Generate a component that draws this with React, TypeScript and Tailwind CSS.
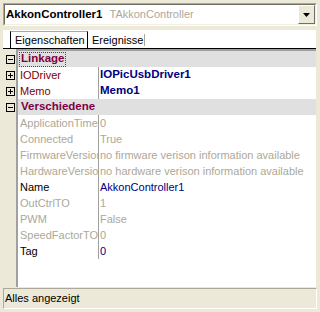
type Row =
  | { kind: 'cat'; label: string; focus?: boolean }
  | { kind: 'prop'; name: string; value: string; nameCls: string; valueCls: string; expand?: boolean };

const RO = 'text-[#ACA899]';

const rows: Row[] = [
  { kind: 'cat', label: 'Linkage', focus: true },
  { kind: 'prop', name: 'IODriver', value: 'IOPicUsbDriver1', nameCls: 'text-[#800000]', valueCls: 'text-[#000080] font-bold text-[11.5px]', expand: true },
  { kind: 'prop', name: 'Memo', value: 'Memo1', nameCls: 'text-[#800000]', valueCls: 'text-[#000080] font-bold text-[11.5px]', expand: true },
  { kind: 'cat', label: 'Verschiedene' },
  { kind: 'prop', name: 'ApplicationTimeout', value: '0', nameCls: RO, valueCls: RO },
  { kind: 'prop', name: 'Connected', value: 'True', nameCls: RO, valueCls: RO },
  { kind: 'prop', name: 'FirmwareVersion', value: 'no firmware verison information available', nameCls: RO, valueCls: RO },
  { kind: 'prop', name: 'HardwareVersion', value: 'no hardware verison information available', nameCls: RO, valueCls: RO },
  { kind: 'prop', name: 'Name', value: 'AkkonController1', nameCls: 'text-black', valueCls: 'text-[#000080]' },
  { kind: 'prop', name: 'OutCtrlTO', value: '1', nameCls: RO, valueCls: RO },
  { kind: 'prop', name: 'PWM', value: 'False', nameCls: RO, valueCls: RO },
  { kind: 'prop', name: 'SpeedFactorTO', value: '0', nameCls: RO, valueCls: RO },
  { kind: 'prop', name: 'Tag', value: '0', nameCls: 'text-black', valueCls: 'text-[#000080]' },
];

function Toggle({ open }: { open: boolean }) {
  return (
    <div className="relative w-[9px] h-[9px] border border-black">
      <div className="absolute left-[1px] top-[3px] w-[5px] h-[1px] bg-black" />
      {!open && <div className="absolute left-[3px] top-[1px] w-[1px] h-[5px] bg-black" />}
    </div>
  );
}

export default function App() {
  return (
    <div className="w-[320px] h-[312px] bg-[#ECE9D8] flex flex-col overflow-hidden font-['Liberation_Sans',Arial,sans-serif] text-[11px] text-black">
      {/* Component selector combo */}
      <div className="mx-[3px] mt-[3px] h-[23px] border border-t-[#ACA899] border-l-[#ACA899] border-b-white border-r-white">
        <div className="h-full border border-t-[#716F64] border-l-[#716F64] border-b-[#F1EFE2] border-r-[#F1EFE2] bg-white flex items-center">
          <span className="pl-[1px] font-bold text-[11.5px] leading-none">AkkonController1</span>
          <span className="ml-[7px] text-[#ACA899] leading-none">TAkkonController</span>
          <div className="ml-auto w-[17px] h-full bg-[#ECE9D8] border border-t-white border-l-white border-b-[#716F64] border-r-[#716F64] flex items-center justify-center">
            <svg width="7" height="4" viewBox="0 0 7 4">
              <path d="M0 0h7L3.5 4z" fill="#000" />
            </svg>
          </div>
        </div>
      </div>

      {/* Tabs */}
      <div className="ml-[3px] mt-[4px] w-[313px] h-[19px] bg-white border-b border-black flex items-end">
        <div className="ml-[7px] w-[78px] h-[17px] border-l border-r border-black border-t border-t-[#ACA899] pl-[4px] flex items-center leading-none">
          Eigenschaften
        </div>
        <div className="ml-[1px] mb-[2px] w-[56px] h-[12px] border-r border-[#ACA899] pl-[3px] flex items-center leading-none overflow-hidden whitespace-nowrap">
          Ereignisse
        </div>
      </div>

      {/* Property grid */}
      <div className="w-[316px] h-[238px] flex flex-col">
        <div className="flex h-[2px]">
          <div className="w-[16px]" />
          <div className="flex-1 bg-[#A0A0A0]" />
        </div>
        {rows.map((r, i) => (
          <div key={i} className="flex h-[16px]">
            <div className="w-[16px] pl-[6px] flex items-center">
              {r.kind === 'cat' ? <Toggle open /> : r.expand ? <Toggle open={false} /> : null}
            </div>
            {r.kind === 'cat' ? (
              <div className="flex-1 border-l-2 border-[#A0A0A0] bg-[#E0E0E0] flex items-center">
                <span
                  className={
                    'ml-[1px] h-[15px] px-[1px] flex items-center font-bold text-[11.5px] text-[#800040] border border-dotted ' +
                    (r.focus ? 'border-[#0a6a3a]' : 'border-transparent')
                  }
                >
                  {r.label}
                </span>
              </div>
            ) : (
              <div className="flex-1 border-l-2 border-[#A0A0A0] bg-white flex items-center">
                <div className={'w-[81px] h-full pl-[2px] border-r border-[#A0A0A0] flex items-center overflow-hidden whitespace-nowrap ' + r.nameCls}>
                  {r.name}
                </div>
                <div className={'flex-1 pl-[1px] overflow-hidden whitespace-nowrap ' + r.valueCls}>{r.value}</div>
              </div>
            )}
          </div>
        ))}
        <div className="flex flex-1">
          <div className="w-[16px]" />
          <div className="flex-1 border-l-2 border-[#A0A0A0] bg-white" />
        </div>
      </div>

      {/* Status bar */}
      <div className="mx-[3px] mt-[1px] h-[21px] border border-t-[#ACA899] border-l-[#ACA899] border-b-white border-r-white pl-[1px] flex items-center">
        Alles angezeigt
      </div>
    </div>
  );
}
